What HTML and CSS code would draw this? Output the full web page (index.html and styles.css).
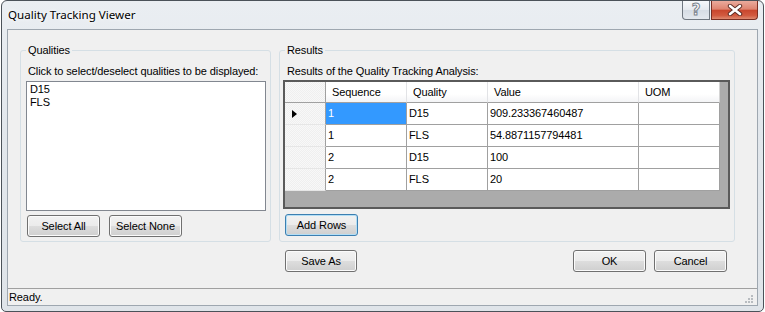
FILE: index.html
```html
<!DOCTYPE html>
<html>
<head>
<meta charset="utf-8">
<link rel="stylesheet" href="styles.css">
</head>
<body>
<div class="window">
  <div class="titlebar">
    <span class="title">Quality Tracking Viewer</span>
    <div class="caption-buttons">
      <div class="cap help"><span class="qmark">?</span></div>
      <div class="cap close">
        <svg width="16" height="12" viewBox="0 0 16 12">
          <path d="M3 2 L13 10 M13 2 L3 10" stroke="#5a2a22" stroke-width="4.4" stroke-linecap="round"/>
          <path d="M3 2 L13 10 M13 2 L3 10" stroke="#ffffff" stroke-width="2.6" stroke-linecap="round"/>
        </svg>
      </div>
    </div>
  </div>
  <div class="client">
    <div class="content">
      <fieldset class="group qualities">
        <legend>Qualities</legend>
        <div class="label">Click to select/deselect qualities to be displayed:</div>
        <div class="listbox">
          <div class="item">D15</div>
          <div class="item">FLS</div>
        </div>
        <div class="btnrow">
          <button class="btn first">Select All</button>
          <button class="btn">Select None</button>
        </div>
      </fieldset>
      <fieldset class="group results">
        <legend>Results</legend>
        <div class="label rlabel">Results of the Quality Tracking Analysis:</div>
        <div class="grid">
          <div class="grow hdr">
            <div class="cell rh"></div>
            <div class="cell">Sequence</div>
            <div class="cell">Quality</div>
            <div class="cell">Value</div>
            <div class="cell">UOM</div>
          </div>
          <div class="grow">
            <div class="cell rh"><span class="arrow"></span></div>
            <div class="cell sel">1</div>
            <div class="cell">D15</div>
            <div class="cell">909.233367460487</div>
            <div class="cell"></div>
          </div>
          <div class="grow">
            <div class="cell rh"></div>
            <div class="cell">1</div>
            <div class="cell">FLS</div>
            <div class="cell">54.8871157794481</div>
            <div class="cell"></div>
          </div>
          <div class="grow">
            <div class="cell rh"></div>
            <div class="cell">2</div>
            <div class="cell">D15</div>
            <div class="cell">100</div>
            <div class="cell"></div>
          </div>
          <div class="grow">
            <div class="cell rh"></div>
            <div class="cell">2</div>
            <div class="cell">FLS</div>
            <div class="cell">20</div>
            <div class="cell"></div>
          </div>
        </div>
        <div class="btnrow addrow">
          <button class="btn focus">Add Rows</button>
        </div>
      </fieldset>
      <div class="spacer"></div>
      <div class="bottom">
        <button class="btn saveas">Save As</button>
        <div class="okcancel">
          <button class="btn">OK</button>
          <button class="btn">Cancel</button>
        </div>
      </div>
    </div>
    <div class="statusbar">
      <span class="status">Ready.</span>
      <svg class="grip" width="10" height="10" viewBox="0 0 10 10">
        <rect x="7" y="1" width="2" height="2" fill="#b8bcc0"/>
        <rect x="4" y="4" width="2" height="2" fill="#b8bcc0"/>
        <rect x="7" y="4" width="2" height="2" fill="#b8bcc0"/>
        <rect x="1" y="7" width="2" height="2" fill="#b8bcc0"/>
        <rect x="4" y="7" width="2" height="2" fill="#b8bcc0"/>
        <rect x="7" y="7" width="2" height="2" fill="#b8bcc0"/>
      </svg>
    </div>
  </div>
</div>
</body>
</html>
```

FILE: styles.css
```css
* { box-sizing: border-box; }
html, body { margin: 0; padding: 0; }
body {
  width: 765px;
  height: 312px;
  overflow: hidden;
  background: #ffffff;
  font-family: "Liberation Sans", Arial, sans-serif;
  font-size: 11px;
  letter-spacing: -0.1px;
  color: #000;
}

.window {
  margin-left: 1px;
  width: 763px;
  height: 312px;
  border: 1px solid #4b5259;
  border-radius: 6px 6px 5px 5px;
  background: linear-gradient(180deg, #eaeef2 0%, #e2e7ec 40%, #dfe4e9 100%);
  padding: 0 5px 5px 5px;
  display: flex;
  flex-direction: column;
}

.titlebar {
  height: 28px;
  display: flex;
  align-items: flex-start;
}
.title {
  font-family: "Noto Sans", "Open Sans", sans-serif;
  font-size: 11.6px;
  letter-spacing: 0;
  line-height: 28px;
  margin-left: 1px;
  color: #000;
  text-shadow: 0 0 6px #ffffff, 0 0 3px #ffffff;
}
.caption-buttons {
  margin-left: auto;
  display: flex;
  gap: 1px;
}
.cap {
  height: 19px;
  border: 1px solid #6f7780;
  border-top: none;
  display: flex;
  align-items: center;
  justify-content: center;
}
.help {
  width: 28px;
  border-radius: 0 0 0 4px;
  background: linear-gradient(180deg, #f7f9fb 0%, #e6eaef 48%, #d6dde5 52%, #e3e8ee 100%);
}
.qmark {
  font-family: "DejaVu Sans", sans-serif;
  font-weight: bold;
  font-size: 15px;
  line-height: 15px;
  letter-spacing: 0;
  color: #ffffff;
  -webkit-text-stroke: 1px #7a838e;
  margin-top: 1px;
}
.close {
  width: 47px;
  border-radius: 0 0 4px 0;
  border-color: #7a2e22;
  background: linear-gradient(180deg, #eaab9d 0%, #de8470 45%, #c9472e 52%, #d25a3f 80%, #de8a70 100%);
}

.client {
  height: 277px;
  border: 1px solid #9ea7b0;
  background: #f0f0f0;
  display: flex;
  flex-direction: column;
}
.content {
  flex: 1;
  display: grid;
  grid-template-columns: 251px 456px;
  column-gap: 8px;
  align-content: start;
  padding: 13px 0 0 12px;
}

.group {
  margin: 0;
  min-width: 0;
  border: 1px solid #d5dfe5;
  border-radius: 3px;
  padding: 8px 4px 4px 5px;
}
.group legend {
  padding: 0 2px;
  line-height: 14px;
}
.results { padding-left: 3px; }
.results legend { margin-left: 2px; }

.label {
  line-height: 13px;
  padding-left: 2px;
  white-space: nowrap;
}
.rlabel { padding-left: 4px; }

.listbox {
  margin-top: 3px;
  height: 130px;
  background: #ffffff;
  border: 1px solid #828790;
  padding: 1px 3px;
}
.item { line-height: 13px; }

.btnrow {
  display: flex;
  gap: 9px;
  margin-top: 4px;
  padding-left: 1px;
}
.addrow { margin-top: 5px; padding-left: 2px; }

.btn {
  width: 73px;
  height: 22px;
  padding: 0;
  border: 1px solid #707070;
  border-radius: 3px;
  background: linear-gradient(180deg, #f2f2f2 0%, #ebebeb 50%, #dddddd 51%, #cfcfcf 100%);
  box-shadow: inset 0 0 0 1px #fbfbfb;
  font-family: "Liberation Sans", Arial, sans-serif;
  font-size: 11px;
  letter-spacing: -0.1px;
  color: #000;
}
.btn.focus {
  border-color: #3c7fb1;
  box-shadow: inset 0 0 0 1px #b3def5;
}

.grid {
  margin-top: 2px;
  width: 447px;
  height: 129px;
  border: 2px solid #5a5a5a;
  background: #ababab;
}
.grow {
  display: grid;
  grid-template-columns: 41px 81px 81px 151px 81px;
  width: 435px;
}
.cell {
  height: 22px;
  line-height: 21px;
  padding-left: 2px;
  background: #ffffff;
  border-right: 1px solid #a0a0a0;
  border-bottom: 1px solid #a0a0a0;
  white-space: nowrap;
  overflow: hidden;
}
.hdr .cell {
  height: 21px;
  line-height: 20px;
  padding-left: 6px;
  background: linear-gradient(180deg, #ffffff 0%, #ffffff 60%, #f3f4f6 100%);
  border-right: 1px solid #e2e3e6;
  border-bottom: 1px solid #a0a0a0;
}
.hdr .cell:nth-child(5) { border-right: 1px solid #d5d5d5; }
.cell.rh,
.hdr .cell.rh {
  background-color: #f7f7f7;
  background-image: repeating-conic-gradient(#efefef 0 25%, #f8f8f8 0 50%);
  background-size: 2px 2px;
  border-right: 1px solid #a0a0a0;
  border-bottom: 1px solid #e6e6e6;
  display: flex;
  align-items: center;
  padding-left: 7px;
}
.hdr .cell.rh { border-bottom: 1px solid #a0a0a0; }
.arrow {
  width: 0;
  height: 0;
  border-top: 4.5px solid transparent;
  border-bottom: 4.5px solid transparent;
  border-left: 5px solid #000;
}
.cell.sel {
  background: #3399ff;
  color: #ffffff;
}

.bottom {
  margin-top: 8px;
  display: flex;
  align-items: center;
  padding-left: 6px;
  padding-right: 8px;
}
.saveas { width: 72px; }
.okcancel {
  margin-left: auto;
  display: flex;
  gap: 8px;
}

.statusbar {
  margin-top: auto;
  height: 17px;
  border-top: 1px solid #a0a0a0;
  display: flex;
  align-items: center;
  padding-left: 1px;
  padding-right: 3px;
}
.status { line-height: 14px; }
.grip { margin-left: auto; margin-top: 4px; }
```
